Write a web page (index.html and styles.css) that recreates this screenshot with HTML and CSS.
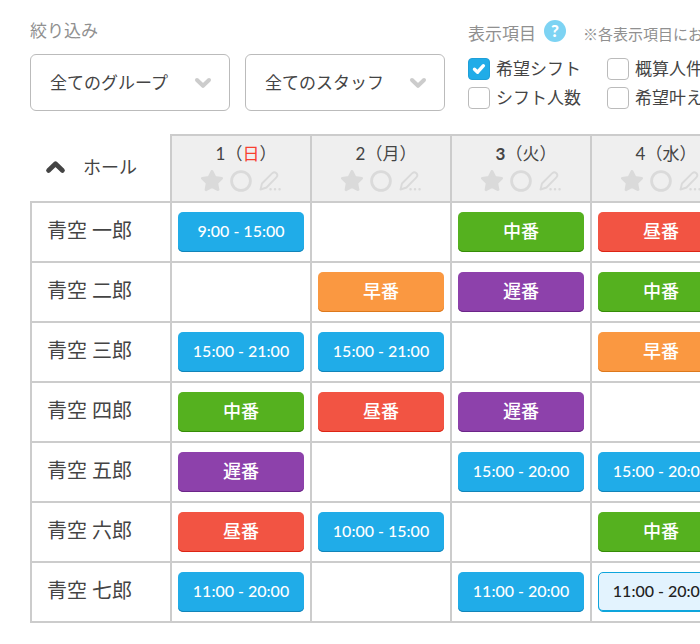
FILE: index.html
```html
<!DOCTYPE html>
<html lang="ja">
<head>
<meta charset="utf-8">
<meta name="viewport" content="width=device-width, initial-scale=1">
<title>シフト表</title>
<link rel="stylesheet" href="styles.css">
</head>
<body>
<svg class="sprite" aria-hidden="true">
  <symbol id="star" viewBox="0 0 22 22"><path d="M11 1.400l3 5.900 6.600 1-4.800 4.600 1.200 6.800-6-3.100-6 3.100 1.200-6.800L1.400 8.300l6.600-1z" fill="currentColor" stroke="currentColor" stroke-width="2.800" stroke-linejoin="round"/></symbol>
  <symbol id="circle" viewBox="0 0 22 22"><circle cx="11" cy="11" r="9.400" fill="none" stroke="currentColor" stroke-width="2.800"/></symbol>
  <symbol id="pencil" viewBox="0 0 22 22"><path d="M1.500 19.500L3 13.500 13.300 3.200a2.900 2.900 0 0 1 4.100 4.100L7.500 17.500z" fill="none" stroke="currentColor" stroke-width="1.900" stroke-linejoin="round"/><path d="M11.500 19.300h.1M16 19.300h.1M20.500 19.300h.1" stroke="currentColor" stroke-width="2.400" stroke-linecap="round"/></symbol>
  <symbol id="chevron" viewBox="0 0 18 12"><path d="M3 3L9 8.800 15 3" fill="none" stroke="currentColor" stroke-width="4" stroke-linecap="round" stroke-linejoin="round"/></symbol>
  <symbol id="tick" viewBox="0 0 22 22"><path d="M6.500 11.200l3.100 3 5.800-6.500" fill="none" stroke="currentColor" stroke-width="3.400" stroke-linecap="round" stroke-linejoin="round"/></symbol>
</svg>

<main class="page">
  <div class="toolbar">
    <fieldset class="filters">
      <legend class="caption">絞り込み</legend>
      <div class="selects">
        <div class="select"><select aria-label="グループ"><option>全てのグループ</option></select><svg><use href="#chevron"/></svg></div>
        <div class="select"><select aria-label="スタッフ"><option>全てのスタッフ</option></select><svg><use href="#chevron"/></svg></div>
      </div>
    </fieldset>
    <section class="display">
      <div class="display-head">
        <span class="caption">表示項目</span>
        <button class="help" type="button">?</button>
        <span class="note">※各表示項目にお</span>
      </div>
      <div class="checks">
        <label class="check"><input type="checkbox" checked><svg><use href="#tick"/></svg>希望シフト</label>
        <label class="check"><input type="checkbox"><svg><use href="#tick"/></svg>概算人件</label>
        <label class="check"><input type="checkbox"><svg><use href="#tick"/></svg>シフト人数</label>
        <label class="check"><input type="checkbox"><svg><use href="#tick"/></svg>希望叶え</label>
      </div>
    </section>
  </div>

  <table class="shifts">
    <thead>
      <tr>
        <th class="group"><button type="button"><svg><use href="#chevron"/></svg>ホール</button></th>
        <th class="day"><div class="date">1（<span class="sunday">日</span>）</div><div class="marks"><svg><use href="#star"/></svg><svg><use href="#circle"/></svg><svg><use href="#pencil"/></svg></div></th>
        <th class="day"><div class="date">2（月）</div><div class="marks"><svg><use href="#star"/></svg><svg><use href="#circle"/></svg><svg><use href="#pencil"/></svg></div></th>
        <th class="day"><div class="date"><b>3</b>（火）</div><div class="marks"><svg><use href="#star"/></svg><svg><use href="#circle"/></svg><svg><use href="#pencil"/></svg></div></th>
        <th class="day"><div class="date">4（水）</div><div class="marks"><svg><use href="#star"/></svg><svg><use href="#circle"/></svg><svg><use href="#pencil"/></svg></div></th>
      </tr>
    </thead>
    <tbody>
      <tr><th>青空 一郎</th><td><button class="shift time">9:00 - 15:00</button></td><td></td><td><button class="shift middle">中番</button></td><td><button class="shift noon">昼番</button></td></tr>
      <tr><th>青空 二郎</th><td></td><td><button class="shift early">早番</button></td><td><button class="shift late">遅番</button></td><td><button class="shift middle">中番</button></td></tr>
      <tr><th>青空 三郎</th><td><button class="shift time">15:00 - 21:00</button></td><td><button class="shift time">15:00 - 21:00</button></td><td></td><td><button class="shift early">早番</button></td></tr>
      <tr><th>青空 四郎</th><td><button class="shift middle">中番</button></td><td><button class="shift noon">昼番</button></td><td><button class="shift late">遅番</button></td><td></td></tr>
      <tr><th>青空 五郎</th><td><button class="shift late">遅番</button></td><td></td><td><button class="shift time">15:00 - 20:00</button></td><td><button class="shift time">15:00 - 20:00</button></td></tr>
      <tr><th>青空 六郎</th><td><button class="shift noon">昼番</button></td><td><button class="shift time">10:00 - 15:00</button></td><td></td><td><button class="shift middle">中番</button></td></tr>
      <tr><th>青空 七郎</th><td><button class="shift time">11:00 - 20:00</button></td><td></td><td><button class="shift time">11:00 - 20:00</button></td><td><button class="shift time request">11:00 - 20:00</button></td></tr>
    </tbody>
  </table>
</main>
</body>
</html>
```
FILE: styles.css
```css
* { box-sizing: border-box; }

body {
  margin: 0;
  overflow-x: hidden;
  background: #fff;
  color: #444;
  font-family: Lato, "Noto Sans CJK JP", sans-serif;
  font-size: 17px;
  line-height: 24px;
}

button, select {
  margin: 0;
  font: inherit;
  color: inherit;
  cursor: pointer;
}

.sprite { display: none; }

.page {
  padding: 19px 0 20px 30px;
  overflow: hidden;
}

.toolbar {
  display: flex;
  gap: 23px;
  margin-bottom: 23px;
  white-space: nowrap;
}

.filters {
  margin: 0;
  padding: 0;
  border: 0;
}

.caption {
  padding: 0;
  color: #909090;
}

.selects {
  display: flex;
  gap: 15px;
  margin-top: 11px;
}

.select {
  position: relative;
  width: 200px;
}

.select select {
  width: 100%;
  height: 57px;
  padding: 0 48px 0 19px;
  border: 1px solid #bbb;
  border-radius: 6px;
  background: #fff;
  appearance: none;
}

.select svg {
  position: absolute;
  top: 23px;
  right: 18px;
  width: 18px;
  height: 12px;
  color: #ccc;
  pointer-events: none;
}

.display-head {
  display: flex;
  align-items: center;
  height: 30px;
}

.help {
  width: 22px;
  height: 22px;
  margin: 0 17px 6px 8px;
  padding: 0;
  border: 0;
  border-radius: 50%;
  background: #7dd3f3;
  color: #fff;
  font-size: 17px;
  font-weight: 900;
  line-height: 22px;
}

.note {
  color: #909090;
  font-size: 15px;
}

.checks {
  display: grid;
  grid-template-columns: 139px 139px;
  row-gap: 5px;
  margin-top: 8px;
}

.check {
  position: relative;
  display: flex;
  align-items: center;
  gap: 6px;
}

.check input {
  width: 22px;
  height: 22px;
  margin: 0;
  border: 1px solid #bbb;
  border-radius: 4px;
  background: #fff;
  appearance: none;
}

.check input:checked {
  border-color: #1f9fd8;
  background: #20ace8;
}

.check svg {
  position: absolute;
  left: 0;
  width: 22px;
  height: 22px;
  color: #fff;
  pointer-events: none;
}

.shifts {
  width: 702px;
  table-layout: fixed;
  border-collapse: collapse;
}

.shifts th, .shifts td {
  height: 60px;
  padding: 0 6px;
  border: 2px solid #ccc;
  text-align: center;
}

.shifts th {
  font-weight: 400;
}

.shifts tbody th {
  padding: 0 0 4px 15px;
  font-size: 20px;
  text-align: left;
}

.shifts thead th { height: 67px; }

.shifts .group {
  padding: 0 0 2px 14px;
  border-top: 0;
  border-left: 0;
  text-align: left;
}

.group button {
  display: flex;
  align-items: center;
  gap: 17px;
  padding: 0;
  border: 0;
  background: none;
  font-size: 18px;
}

.group svg {
  width: 21px;
  height: 14px;
  transform: rotate(180deg);
}

.shifts .day {
  padding-bottom: 4px;
  background: #efefef;
  font-size: 17px;
}

.date { padding-left: 10px; }

.sunday { color: #f8402f; }

.marks {
  display: flex;
  justify-content: center;
  gap: 7px;
  margin-top: 4px;
  color: #dadada;
}

.marks svg {
  width: 22px;
  height: 22px;
  overflow: visible;
}

.shift {
  display: block;
  width: 100%;
  height: 40px;
  padding: 0 0 2px;
  border: 0;
  border-radius: 5px;
  color: #fff;
  font-size: 18px;
  font-weight: 500;
  white-space: nowrap;
}

.time {
  background: #20ace8;
  box-shadow: inset 0 -1px #1284b8;
  font-size: 16px;
}

.middle {
  background: #55b11f;
  box-shadow: inset 0 -1px #358c07;
}

.noon {
  background: #f25443;
  box-shadow: inset 0 -1px #dc2414;
}

.early {
  background: #fa9841;
  box-shadow: inset 0 -1px #dc781c;
}

.late {
  background: #8d41ab;
  box-shadow: inset 0 -1px #6b2588;
}

.request {
  border: 1px solid #0ea5dc;
  background: #e3f3fe;
  box-shadow: inset 0 -1px #0ea5dc;
  color: #222;
}
```
